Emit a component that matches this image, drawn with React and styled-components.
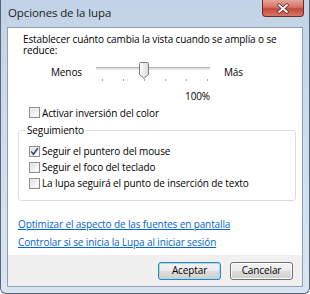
import React from "react";
import styled, { createGlobalStyle } from "styled-components";

const GlobalStyle = createGlobalStyle`
  html, body {
    margin: 0;
    padding: 0;
    background: #ffffff;
  }
  body {
    font-family: "Open Sans", "Noto Sans", sans-serif;
    font-size: 10px;
    letter-spacing: -0.12px;
    color: #000000;
  }
`;

const ticks = [0, 1, 2, 3, 4, 5];

const tracking = [
  { label: "Seguir el puntero del mouse", checked: true },
  { label: "Seguir el foco del teclado", checked: false },
  { label: "La lupa seguirá el punto de inserción de texto", checked: false },
];

const Check = ({ checked }) => (
  <Box>
    {checked && (
      <svg width="9" height="9" viewBox="0 0 9 9">
        <path d="M1.2 4.6 L3.4 7.2 L7.8 1.2" fill="none" stroke="#2b3f85" strokeWidth="1.5" />
      </svg>
    )}
  </Box>
);

const App = () => {
  return (
    <>
      <GlobalStyle />
      <Window>
        <TitleBar>
          <span className="title">Opciones de la lupa</span>
          <CloseButton>
            <svg width="14" height="11" viewBox="0 0 14 11">
              <path d="M3 2 L11 9 M11 2 L3 9" stroke="#5b2420" strokeWidth="3.4" strokeLinecap="round" />
              <path d="M3 2 L11 9 M11 2 L3 9" stroke="#ffffff" strokeWidth="1.8" strokeLinecap="round" />
            </svg>
          </CloseButton>
        </TitleBar>
        <Content>
          <Body>
            <Intro>Establecer cuánto cambia la vista cuando se amplía o se reduce:</Intro>
            <SliderRow>
              <span className="label">Menos</span>
              <Slider>
                <div className="track" />
                <div className="ticks">
                  {ticks.map((t) => (
                    <i key={t} />
                  ))}
                </div>
                <Thumb width="10" height="17" viewBox="0 0 10 17">
                  <defs>
                    <linearGradient id="thumbFill" x1="0" y1="0" x2="1" y2="0">
                      <stop offset="0" stopColor="#ffffff" />
                      <stop offset="1" stopColor="#d9d9d9" />
                    </linearGradient>
                  </defs>
                  <path
                    d="M1.5 0.5 H8.5 Q9.5 0.5 9.5 1.5 V12.5 L5 16.3 L0.5 12.5 V1.5 Q0.5 0.5 1.5 0.5 Z"
                    fill="url(#thumbFill)"
                    stroke="#7a7a7a"
                  />
                </Thumb>
              </Slider>
              <span className="label more">Más</span>
            </SliderRow>
            <Percent>100%</Percent>
            <CheckRow $indent={11}>
              <Check checked={false} />
              Activar inversión del color
            </CheckRow>
            <Group>
              <legend>Seguimiento</legend>
              {tracking.map((item) => (
                <CheckRow key={item.label} $indent={0} $tall>
                  <Check checked={item.checked} />
                  {item.label}
                </CheckRow>
              ))}
            </Group>
            <Link $top={17}>Optimizar el aspecto de las fuentes en pantalla</Link>
            <Link $top={5}>Controlar si se inicia la Lupa al iniciar sesión</Link>
          </Body>
          <Footer>
            <Button $primary>Aceptar</Button>
            <Button>Cancelar</Button>
          </Footer>
        </Content>
      </Window>
    </>
  );
};

const Window = styled.div`
  width: 310px;
  height: 294px;
  box-sizing: border-box;
  display: flex;
  flex-direction: column;
  padding: 0 6px 6px 6px;
  background: linear-gradient(180deg, #c2d3e7 0%, #cddbeb 40%, #dbe5f0 100%);
  border: 1px solid #56677c;
  border-top: none;
  border-radius: 0 0 6px 6px;
  overflow: hidden;
`;

const TitleBar = styled.div`
  height: 27px;
  display: flex;
  justify-content: space-between;
  align-items: flex-start;

  .title {
    margin: 6px 0 0 1px;
    font-size: 11.5px;
    line-height: 14px;
    color: #1b1b1b;
  }
`;

const CloseButton = styled.div`
  width: 42px;
  height: 17px;
  margin-right: -1px;
  box-sizing: border-box;
  display: flex;
  align-items: center;
  justify-content: center;
  border: 1px solid #6d2a26;
  border-top: none;
  border-radius: 0 0 4px 4px;
  background: linear-gradient(180deg, #e6a597 0%, #d27466 45%, #c2473a 55%, #d9776a 100%);
`;

const Content = styled.div`
  flex: 1;
  display: flex;
  flex-direction: column;
  background: #ffffff;
  border: 1px solid #8ea1b6;
`;

const Body = styled.div`
  flex: 1;
  padding: 6px 6px 0 10px;
`;

const Intro = styled.div`
  margin-left: 5px;
  width: 262px;
  line-height: 11px;
`;

const SliderRow = styled.div`
  display: flex;
  align-items: flex-start;
  margin-top: 5px;
  padding-left: 33px;
  height: 22px;

  .label {
    width: 41px;
    margin-top: 5px;
    line-height: 13px;
  }
  .more {
    width: auto;
    margin-left: 10px;
  }
`;

const Slider = styled.div`
  position: relative;
  width: 122px;
  height: 22px;

  .track {
    margin: 6px 4px 0 4px;
    height: 1px;
    border-top: 1px solid #b5b5b5;
    border-bottom: 1px solid #ececec;
    background: #dcdcdc;
  }
  .ticks {
    display: flex;
    justify-content: space-between;
    margin: 9px 6px 0 10px;
  }
  .ticks i {
    width: 1px;
    height: 2px;
    background: #a8a8a8;
  }
`;

const Thumb = styled.svg`
  position: absolute;
  left: 47px;
  top: 1px;
`;

const Percent = styled.div`
  width: 192px;
  margin-top: 7px;
  text-align: right;
  line-height: 13px;
`;

const CheckRow = styled.div`
  display: flex;
  align-items: center;
  gap: 2px;
  margin-left: ${(p) => p.$indent}px;
  margin-top: ${(p) => (p.$tall ? 0 : 3)}px;
  height: ${(p) => (p.$tall ? 16 : 13)}px;
  white-space: nowrap;
`;

const Box = styled.span`
  width: 11px;
  height: 11px;
  box-sizing: border-box;
  display: flex;
  align-items: center;
  justify-content: center;
  border: 1px solid #8f8f8f;
  background: linear-gradient(135deg, #d8d8d8 0%, #f4f4f4 60%, #ffffff 100%);
  box-shadow: inset 0 0 0 1px #f2f2f2;
`;

const Group = styled.fieldset`
  margin: 5px 0 0 0;
  padding: 6px 10px 9px 10px;
  border: 1px solid #d5dfe5;
  border-radius: 3px;

  legend {
    margin-left: -4px;
    padding: 0 2px;
    line-height: 13px;
  }
`;

const Link = styled.div`
  margin-top: ${(p) => p.$top}px;
  line-height: 13px;
  color: #0066cc;
  text-decoration: underline;
  cursor: pointer;
`;

const Footer = styled.div`
  height: 31px;
  display: flex;
  align-items: center;
  justify-content: flex-end;
  gap: 9px;
  padding-right: 9px;
  background: #f0f0f0;
`;

const Button = styled.div`
  width: 63px;
  height: 18px;
  box-sizing: border-box;
  display: flex;
  align-items: center;
  justify-content: center;
  border: 1px solid ${(p) => (p.$primary ? "#3c7fb1" : "#707070")};
  border-radius: 3px;
  background: linear-gradient(180deg, #f2f2f2 0%, #ebebeb 48%, #dddddd 52%, #cfcfcf 100%);
  box-shadow: inset 0 0 0 1px ${(p) => (p.$primary ? "#9fdcf7" : "#fbfbfb")};
  line-height: 13px;
`;

export default App;
